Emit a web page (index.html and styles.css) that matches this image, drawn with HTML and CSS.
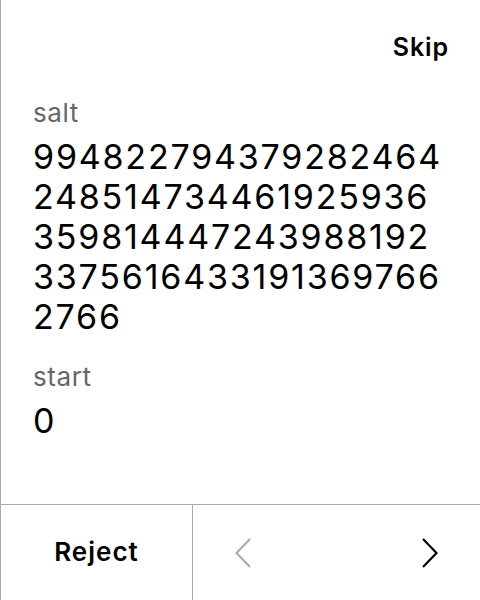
FILE: index.html
```html
<!DOCTYPE html>
<html>
<head>
<meta charset="utf-8">
<link rel="stylesheet" href="styles.css">
</head>
<body>
<div class="screen">
  <main class="content">
    <div class="topbar"><span class="skip">Skip</span></div>
    <div class="field">
      <div class="label">salt</div>
      <div class="value">994822794379282464<br>248514734461925936<br>359814447243988192<br>3375616433191369766<br>2766</div>
    </div>
    <div class="field">
      <div class="label">start</div>
      <div class="value">0</div>
    </div>
  </main>
  <footer class="footer">
    <div class="reject">Reject</div>
    <div class="nav">
      <svg class="chev prev" width="18" height="32" viewBox="0 0 18 32"><path d="M16 2 L2.5 16 L16 30" fill="none" stroke="#a8a8a8" stroke-width="2"/></svg>
      <svg class="chev next" width="18" height="32" viewBox="0 0 18 32"><path d="M2 2 L15.5 16 L2 30" fill="none" stroke="#000" stroke-width="2.2"/></svg>
    </div>
  </footer>
</div>
</body>
</html>
```
FILE: styles.css
```css
html, body {
  margin: 0;
  padding: 0;
  background: #fff;
}
body {
  font-family: Inter, "Noto Sans", sans-serif;
  color: #000;
}
.screen {
  width: 480px;
  height: 600px;
  box-sizing: border-box;
  border-left: 1px solid #aaaaaa;
  display: flex;
  flex-direction: column;
}
.content {
  flex: 1;
  padding: 0 32px 0 32px;
  display: flex;
  flex-direction: column;
}
.topbar {
  display: flex;
  justify-content: flex-end;
  height: 98px;
  padding-top: 32px;
  box-sizing: border-box;
}
.skip {
  font-size: 25px;
  font-weight: 600;
  line-height: 30px;
  letter-spacing: 0.9px;
  margin-right: -1px;
}
.field {
  display: flex;
  flex-direction: column;
  gap: 9px;
  margin-bottom: 25px;
}
.label {
  font-size: 26px;
  line-height: 30px;
  color: #666;
  letter-spacing: 0.6px;
}
.value {
  font-size: 34px;
  line-height: 40px;
  letter-spacing: 1.8px;
  white-space: nowrap;
}
.footer {
  height: 96px;
  box-sizing: border-box;
  border-top: 1px solid #aaaaaa;
  display: flex;
}
.reject {
  width: 192px;
  box-sizing: border-box;
  border-right: 1px solid #aaaaaa;
  display: flex;
  align-items: center;
  justify-content: center;
  padding-bottom: 3px;
  font-size: 26px;
  font-weight: 600;
  letter-spacing: 1px;
}
.nav {
  flex: 1;
  display: flex;
  align-items: center;
  justify-content: space-between;
  padding: 0 41px;
}
```
